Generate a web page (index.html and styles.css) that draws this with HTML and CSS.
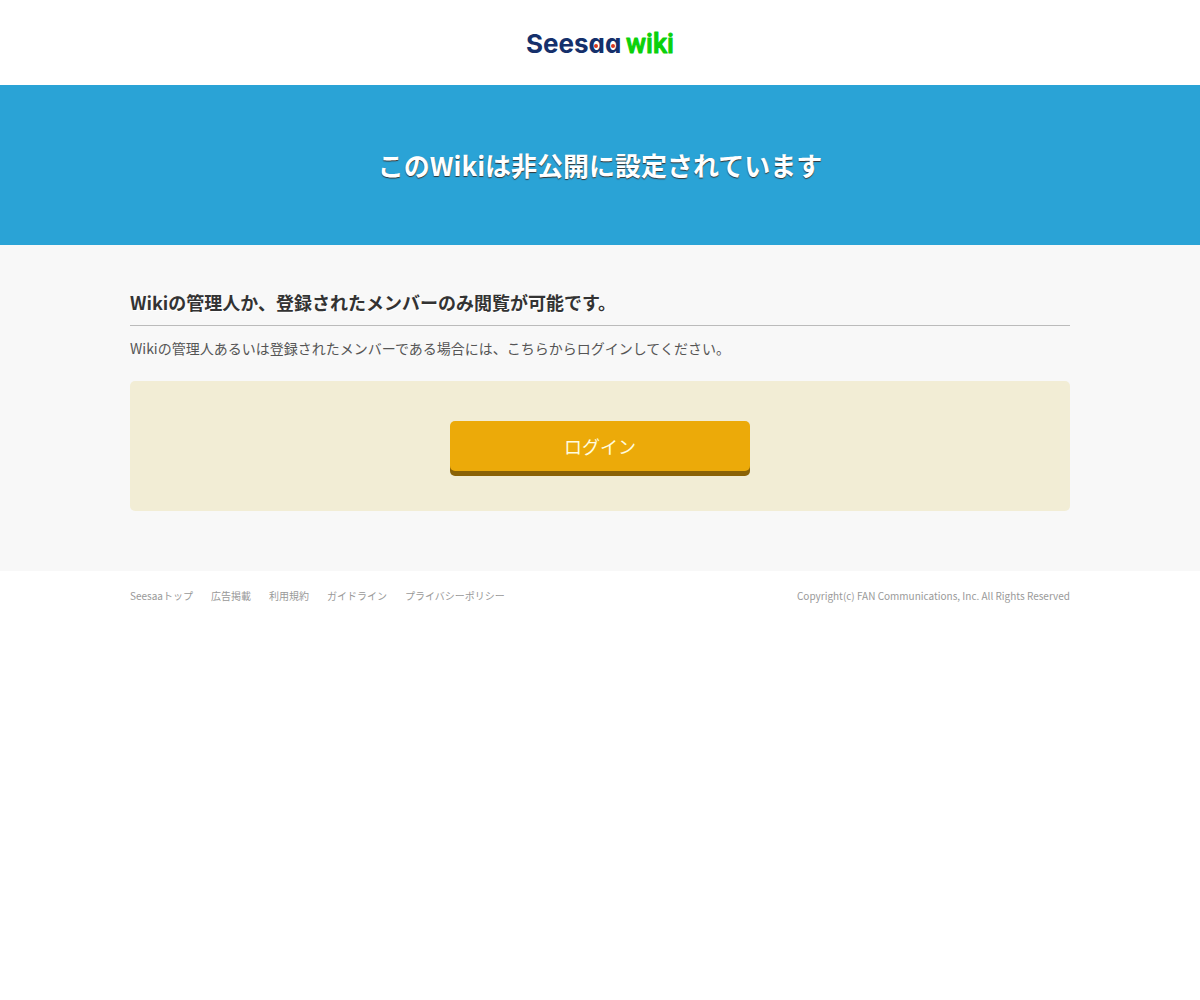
FILE: index.html
```html
<!DOCTYPE html>
<html lang="ja">
  <head>
    <meta charset="UTF-8" />
    <meta name="viewport" content="width=device-width, initial-scale=1.0" />
    <title>このWikiは非公開に設定されています</title>
    <link rel="stylesheet" href="styles.css">
  </head>
  <body>
    <header class="header">
      <a href="#" class="logo">
        <svg width="152" height="45" viewBox="0 0 152 45" role="img" aria-label="Seesaa wiki">
          <text class="logo-seesaa" x="2" y="33">Seesaa</text>
          <circle class="logo-dot" cx="72" cy="26" r="2" />
          <circle class="logo-dot" cx="89" cy="26" r="2" />
          <text class="logo-wiki" x="102" y="33">wiki</text>
        </svg>
      </a>
    </header>

    <div class="title">
      <h1>このWikiは非公開に設定されています</h1>
    </div>

    <main class="content">
      <div class="container">
        <h2>Wikiの管理人か、登録されたメンバーのみ閲覧が可能です。</h2>
        <p>Wikiの管理人あるいは登録されたメンバーである場合には、こちらからログインしてください。</p>
        <form class="login">
          <button type="button" class="btn">ログイン</button>
        </form>
      </div>
    </main>

    <footer class="footer">
      <div class="container">
        <ul>
          <li><a href="#">Seesaaトップ</a></li>
          <li><a href="#">広告掲載</a></li>
          <li><a href="#">利用規約</a></li>
          <li><a href="#">ガイドライン</a></li>
          <li><a href="#">プライバシーポリシー</a></li>
        </ul>
        <small class="copyright">Copyright(c) FAN Communications, Inc. All Rights Reserved</small>
      </div>
    </footer>
  </body>
</html>
```
FILE: styles.css
```css
* {
  box-sizing: border-box;
  margin: 0;
  padding: 0;
}

body {
  background-color: #fff;
  color: #555;
  font-family: "Noto Sans CJK JP", sans-serif;
  font-size: 14px;
  line-height: 20px;
}

a {
  color: inherit;
  text-decoration: none;
}

ul {
  list-style: none;
}

.container {
  max-width: 980px;
  margin: 0 auto;
  padding: 0 20px;
}

/* Header */
.header {
  padding: 20px 0;
  text-align: center;
}

.logo svg {
  display: block;
  margin: 0 auto;
}

/* cv11 is the round, single-storey a */
.logo-seesaa {
  fill: #15306b;
  font-family: Inter, sans-serif;
  font-size: 26px;
  font-weight: 700;
  font-feature-settings: "cv11";
}

.logo-wiki {
  fill: #0ad10a;
  stroke: #0ad10a;
  stroke-linejoin: round;
  font-family: Roboto, sans-serif;
  font-size: 27px;
  font-weight: 500;
}

.logo-dot {
  fill: #d9381e;
}

/* Title */
.title {
  padding: 60px 20px;
  background-color: #2aa3d6;
  text-align: center;
}

.title h1 {
  color: #fff;
  font-size: 26px;
  font-weight: 700;
  line-height: 40px;
  text-shadow: 0 1px 1px #333;
}

/* Content */
.content {
  padding: 40px 0 60px;
  background-color: #f8f8f8;
}

.content h2 {
  padding-bottom: 6px;
  border-bottom: 1px solid #bbb;
  color: #333;
  font-size: 18px;
  font-weight: 700;
  line-height: 34px;
  text-shadow: 1px 1px 0 #fff;
}

.content p {
  margin: 12px 0 23px;
}

.login {
  padding: 40px 20px;
  border-radius: 5px;
  background-color: #f2edd5;
  text-align: center;
}

.btn {
  display: block;
  width: 100%;
  max-width: 300px;
  margin: 0 auto;
  padding: 10px;
  border: 0;
  border-radius: 5px;
  background-color: #ecaa09;
  box-shadow: 0 5px 0 #8a6206;
  color: #fffde0;
  font-family: inherit;
  font-size: 18px;
  line-height: 30px;
  cursor: pointer;
}

/* Footer */
.footer {
  padding: 15px 0;
  color: #999;
  font-size: 10px;
}

.footer .container {
  display: flex;
  flex-wrap: wrap;
  justify-content: space-between;
}

.footer ul {
  display: flex;
  flex-wrap: wrap;
  gap: 0 18px;
}

.copyright {
  font-size: 10px;
}
```
